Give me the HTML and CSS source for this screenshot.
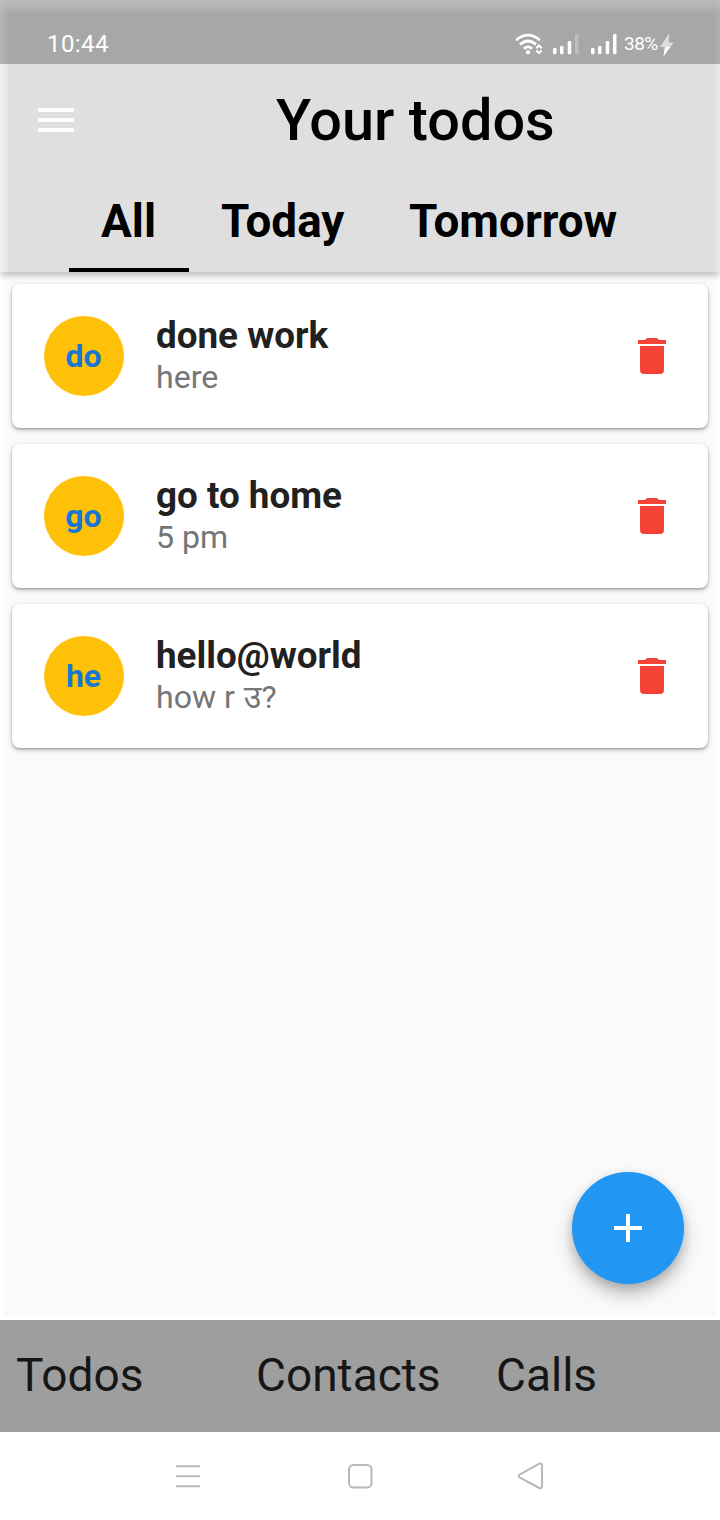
FILE: index.html
```html
<!DOCTYPE html>
<html lang="en">
<head>
<meta charset="utf-8">
<title>Your todos</title>
<link rel="stylesheet" href="styles.css">
</head>
<body>
<div class="screen">
  <header class="appbar">
    <div class="status">
      <span class="clock">10:44</span>
      <div class="indicators">
        <svg class="wifi" width="30" height="24" viewBox="0 0 30 24" fill="none" stroke="#fff" stroke-width="2.7">
          <path d="M1.200 7.200Q13 -2.800 24.800 7.200M5 11.500Q13 4.500 21 11.500M9 15.700Q13 11.900 17 15.700"/>
          <circle cx="13" cy="19.200" r="2.100" fill="#fff" stroke="none"/>
          <path d="M21.300 15.200L24 12.500L26.700 15.200M21.300 17.500L24 20.200L26.700 17.500" stroke-width="2"/>
        </svg>
        <svg class="signal" width="27" height="22" viewBox="0 0 27 22" fill="#fff">
          <rect x="0" y="14" width="3.500" height="6.200" rx="1.200"/><rect x="7" y="12" width="3.500" height="8.200" rx="1.200"/><rect x="14.700" y="7" width="3.500" height="13.200" rx="1.200"/><rect x="22" y="0" width="3.500" height="20.200" rx="1.200" fill="#bdbdbd"/>
        </svg>
        <svg class="signal second" width="27" height="22" viewBox="0 0 27 22" fill="#fff">
          <rect x="0" y="14" width="3.500" height="6.200" rx="1.200"/><rect x="7" y="12" width="3.500" height="8.200" rx="1.200"/><rect x="14.700" y="7" width="3.500" height="13.200" rx="1.200"/><rect x="22" y="0" width="3.500" height="20.200" rx="1.200"/>
        </svg>
        <span class="battery">38%</span>
        <svg class="bolt" width="14" height="24" viewBox="0 0 14 24">
          <path d="M9.500 0L0 14H5L3.500 23.500L13.500 9.500H8.500Z" fill="#dedede"/>
          <path d="M0 14H10.300L3.500 23.500L5 14Z" fill="#fff"/>
        </svg>
      </div>
    </div>
    <div class="toolbar">
      <svg class="menu" width="36" height="24" viewBox="0 0 36 24" fill="#fff"><path d="M0 0h36v4H0zM0 10h36v4H0zM0 20h36v4H0z"/></svg>
      <h1 class="title">Your todos</h1>
    </div>
    <nav class="tabs">
      <div class="tab active"><span>All</span></div>
      <div class="tab today"><span>Today</span></div>
      <div class="tab tomorrow"><span>Tomorrow</span></div>
    </nav>
  </header>
  <main class="content">
    <article class="card">
      <div class="avatar">do</div>
      <div class="text"><div class="name">done work</div><div class="note">here</div></div>
      <svg class="trash" width="28" height="36" viewBox="0 0 28 36" fill="#f44336"><path d="M2 32a4 4 0 0 0 4 4h16a4 4 0 0 0 4-4V8H2zM28 2h-7L19 0H9L7 2H0v4h28z"/></svg>
    </article>
    <article class="card">
      <div class="avatar">go</div>
      <div class="text"><div class="name">go to home</div><div class="note">5 pm</div></div>
      <svg class="trash" width="28" height="36" viewBox="0 0 28 36" fill="#f44336"><path d="M2 32a4 4 0 0 0 4 4h16a4 4 0 0 0 4-4V8H2zM28 2h-7L19 0H9L7 2H0v4h28z"/></svg>
    </article>
    <article class="card">
      <div class="avatar">he</div>
      <div class="text"><div class="name">hello@world</div><div class="note">how r <span class="deva">उ</span>?</div></div>
      <svg class="trash" width="28" height="36" viewBox="0 0 28 36" fill="#f44336"><path d="M2 32a4 4 0 0 0 4 4h16a4 4 0 0 0 4-4V8H2zM28 2h-7L19 0H9L7 2H0v4h28z"/></svg>
    </article>
    <div class="fab"><svg width="28" height="28" viewBox="0 0 28 28" fill="#fff"><path d="M12 0h4v12h12v4H16v12h-4V16H0v-4h12z"/></svg></div>
  </main>
  <nav class="bottom"><span>Todos</span><span>Contacts</span><span>Calls</span></nav>
  <footer class="system">
    <svg width="26" height="26" viewBox="0 0 26 26" fill="none" stroke="#bababa" stroke-width="2"><path d="M1 3.300h24M1 13.300h24M1 23.300h24"/></svg>
    <svg width="26" height="26" viewBox="0 0 26 26" fill="none" stroke="#b8b8b8" stroke-width="2"><rect x="2" y="2" width="22.500" height="22.500" rx="4.500"/></svg>
    <svg class="back" width="28" height="28" viewBox="0 0 28 28" fill="none" stroke="#b8b8b8" stroke-width="2"><path d="M3 12.300L22.200 1.700Q25 .8 25 4V24Q25 27.200 22.200 26L3 15.700Q.5 14 3 12.300Z"/></svg>
  </footer>
</div>
</body>
</html>
```
FILE: styles.css
```css
* { box-sizing: border-box; }
body { margin: 0; font-family: Roboto, "Noto Sans", sans-serif; background: #fff; }
svg { display: block; flex: none; }
.screen { width: 720px; height: 1520px; display: flex; flex-direction: column; overflow: hidden; }

.appbar {
  position: relative; z-index: 1; height: 272px; flex: none;
  background:
    linear-gradient(to bottom, rgba(255,255,255,.8) 0, rgba(255,255,255,.6) 6px, rgba(255,255,255,0) 13px),
    linear-gradient(to right, rgba(255,255,255,.6) 0, rgba(255,255,255,.35) 4px, rgba(255,255,255,0) 10px),
    linear-gradient(to left, rgba(255,255,255,.4) 0, rgba(255,255,255,.2) 3px, rgba(255,255,255,0) 7px),
    #dfdfdf;
  box-shadow: 0 2px 8px rgba(0,0,0,.32);
}
.status {
  height: 64px; padding: 0 46px 0 47px; color: #fff;
  background: rgba(0,0,0,.25);
  display: flex; justify-content: space-between;
}
.clock { font-size: 24px; line-height: 28px; padding-top: 30px; letter-spacing: .4px; }
.indicators { display: flex; align-items: flex-start; }
.wifi { margin: 33px 8px 0 0; }
.signal { margin-top: 34px; }
.second { margin-left: 11px; }
.battery { width: 36px; margin: 31px 0 0 6px; font-size: 19px; line-height: 25px; letter-spacing: -.5px; white-space: nowrap; }
.bolt { margin: 33px 0 0; }

.toolbar { height: 112px; display: flex; align-items: center; padding-left: 38px; }
.title { margin: 0 0 0 202px; padding-top: 2px; font-size: 57.6px; font-weight: 500; line-height: 68px; white-space: nowrap; }
.tabs { height: 96px; display: flex; padding-left: 69px; font-size: 45.8px; font-weight: 700; line-height: 54px; }
.tab { height: 96px; padding: 19px 0 0 32px; white-space: nowrap; }
.active { width: 120px; border-bottom: 4px solid #000; }
.today { width: 188px; }

.content {
  position: relative; flex: 1; margin: 0 4px 4px; padding: 12px 8px;
  background: #fafafa; display: flex; flex-direction: column; gap: 16px;
}
.card {
  height: 144px; padding: 0 42px 0 32px; border-radius: 8px; background: #fff;
  box-shadow: 0 2px 4px rgba(0,0,0,.28), 0 1px 2px rgba(0,0,0,.16);
  display: flex; align-items: center;
}
.avatar {
  width: 80px; height: 80px; padding-right: 1px; border-radius: 50%; background: #ffc107; color: #1976d2;
  font-size: 32px; font-weight: 700; line-height: 80px; text-align: center;
}
.text { flex: 1; margin-left: 32px; }
.name { padding-top: 1px; font-size: 36.8px; font-weight: 700; line-height: 41px; color: #212121; }
.note { font-size: 32.1px; line-height: 42px; color: #757575; }
.deva { margin-left: 1px; }

.fab {
  position: absolute; right: 32px; bottom: 32px; width: 112px; height: 112px;
  border-radius: 50%; background: #2196f3; display: grid; place-items: center;
  box-shadow: 0 10px 18px rgba(0,0,0,.26), 0 3px 8px rgba(0,0,0,.12);
}
.bottom {
  height: 112px; flex: none; padding: 0 16px; background: #9e9e9e; color: #161616;
  display: grid; grid-template-columns: 240px 240px 1fr;
  font-size: 46px; line-height: 110px;
}
.system { height: 88px; flex: none; padding-left: 175px; display: flex; align-items: center; gap: 146px; }
.back { margin-left: -2px; }
```
